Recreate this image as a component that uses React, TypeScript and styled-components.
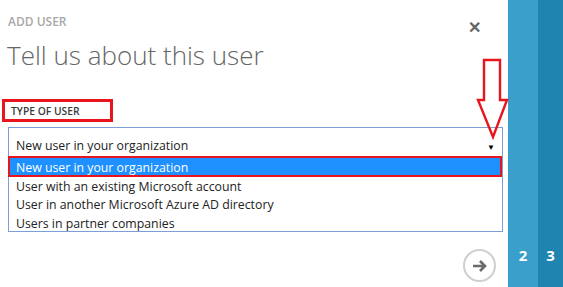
import styled, { createGlobalStyle } from 'styled-components';

const GlobalStyle = createGlobalStyle`
  html, body {
    margin: 0;
    padding: 0;
    background: #fff;
    font-family: "Open Sans", "Noto Sans", Arial, sans-serif;
  }
`;

const Page = styled.div`
  display: flex;
  width: 563px;
  height: 287px;
  overflow: hidden;
  position: relative;
`;

const Panel = styled.div`
  width: 508px;
  height: 287px;
  background: #fff;
  display: flex;
  flex-direction: column;
  padding: 0 5px 0 8px;
  box-sizing: border-box;
`;

const Header = styled.div`
  display: flex;
  justify-content: space-between;
  align-items: flex-start;
`;

const Caption = styled.div`
  margin-top: 15px;
  font-size: 12px;
  line-height: 14px;
  font-weight: 600;
  color: #a8a8a8;
`;

const Title = styled.div`
  margin-top: 10px;
  margin-left: -1px;
  font-size: 26px;
  line-height: 32px;
  font-weight: 300;
  color: #666;
`;

const Close = styled.div`
  margin: 18px 22px 0 0;
  font-size: 16px;
  font-weight: 700;
  color: #666;
  line-height: 18px;
`;

const FieldLabel = styled.div`
  margin: 28px 0 0 -6px;
  width: 111px;
  height: 23px;
  box-sizing: border-box;
  border: 3px solid #e8141e;
  padding-left: 6px;
  font-size: 10.3px;
  line-height: 18px;
  font-weight: 600;
  color: #3a3a3a;
`;

const Select = styled.div`
  margin-top: 5px;
  height: 29px;
  box-sizing: border-box;
  border: 1px solid #7b9fd6;
  border-bottom: none;
  display: flex;
  align-items: center;
  justify-content: space-between;
  padding: 6px 7px 0 7px;
  font-size: 12.3px;
  color: #222;
`;

const Caret = styled.span`
  font-size: 8px;
  color: #000;
  margin-top: 2px;
`;

const List = styled.div`
  border: 1px solid #7b9fd6;
  border-top: none;
  height: 76px;
  box-sizing: border-box;
`;

const Option = styled.div<{ $selected?: boolean }>`
  height: ${p => (p.$selected ? '21px' : '18.3px')};
  box-sizing: border-box;
  padding: ${p => (p.$selected ? '2px 0 0 6px' : '2px 0 0 7px')};
  font-size: 12.3px;
  line-height: ${p => (p.$selected ? '15px' : '16px')};
  color: ${p => (p.$selected ? '#fff' : '#222')};
  background: ${p => (p.$selected ? '#1e90ff' : 'transparent')};
  border: ${p => (p.$selected ? '2px solid #e8141e' : 'none')};
  margin-left: ${p => (p.$selected ? '-1px' : '0')};
`;

const Footer = styled.div`
  margin-top: auto;
  display: flex;
  justify-content: flex-end;
  padding: 0 7px 5px 0;
`;

const NextButton = styled.div`
  width: 33px;
  height: 33px;
  box-sizing: border-box;
  border: 2px solid #cfcfcf;
  border-radius: 50%;
  display: flex;
  align-items: center;
  justify-content: center;
`;

const Step = styled.div<{ $bg: string; $w: number }>`
  width: ${p => p.$w}px;
  height: 287px;
  background: ${p => p.$bg};
  display: flex;
  align-items: flex-end;
  justify-content: center;
  padding-bottom: 23px;
  box-sizing: border-box;
  color: #fff;
  font-size: 15px;
  font-weight: 700;
  line-height: 18px;
`;

const Annotation = styled.svg`
  position: absolute;
  left: 475px;
  top: 58px;
`;

export default function App() {
  return (
    <Page>
      <GlobalStyle />
      <Panel>
        <Header>
          <div>
            <Caption>ADD USER</Caption>
            <Title>Tell us about this user</Title>
          </div>
          <Close>✕</Close>
        </Header>
        <FieldLabel>TYPE OF USER</FieldLabel>
        <Select>
          <span>New user in your organization</span>
          <Caret>▼</Caret>
        </Select>
        <List>
          <Option $selected>New user in your organization</Option>
          <Option>User with an existing Microsoft account</Option>
          <Option>User in another Microsoft Azure AD directory</Option>
          <Option>Users in partner companies</Option>
        </List>
        <Footer>
          <NextButton>
            <svg width="16" height="14" viewBox="0 0 16 14">
              <path d="M1 7h12M8 2l5 5-5 5" stroke="#6b6b6b" strokeWidth="2.6" fill="none" />
            </svg>
          </NextButton>
        </Footer>
      </Panel>
      <Step $bg="#3a9fcb" $w={30}>2</Step>
      <Step $bg="#1f84b0" $w={25}>3</Step>
      <Annotation width="34" height="82" viewBox="0 0 34 82">
        <path d="M9 2h16v40h7L18 79 3 42h6z" fill="none" stroke="#e8141e" strokeWidth="2.4" />
      </Annotation>
    </Page>
  );
}
